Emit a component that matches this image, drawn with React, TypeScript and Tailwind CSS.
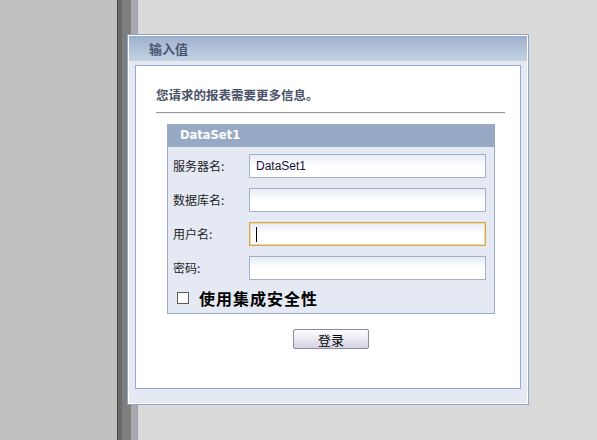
import React from 'react';

const cjk = "font-['Noto_Sans_CJK_SC','Noto_Sans',sans-serif]";

const Field: React.FC<{ label: string; value?: string; focused?: boolean }> = ({ label, value, focused }) => (
  <div className="flex items-center h-6">
    <span className={`${cjk} w-[81px] pl-[5px] text-[12px] text-[#1e1e1e] leading-none`}>{label}</span>
    <div
      className={`relative w-[237px] h-6 border ${
        focused ? 'border-[#d8a550] shadow-[inset_0_0_0_1px_#f0d9a8]' : 'border-[#a3b1c8]'
      } bg-gradient-to-b from-[#e6ecf5] via-white to-white flex items-center pl-[6px]`}
    >
      {value && (
        <span className="font-['Liberation_Sans',Arial,sans-serif] text-[12px] text-[#14103a]">{value}</span>
      )}
      {focused && <span className="w-px h-[15px] bg-black" />}
    </div>
  </div>
);

export default function App() {
  return (
    <div className="relative w-[597px] h-[440px] overflow-hidden flex">
      <div className="w-[117px] bg-[#c0c0c0]" />
      <div className="w-px bg-[#474747]" />
      <div className="w-[4px] bg-[#6b6b6b]" />
      <div className="w-[9px] bg-[#7e7e7e]" />
      <div className="w-[6px] bg-[#a9a9a9]" />
      <div className="w-px bg-[#9c9cb6]" />
      <div className="flex-1 bg-[#dadada]" />

      {/* dialog window */}
      <div className="absolute left-[127px] top-[34px] w-[402px] h-[371px] border border-[#93a5c7]">
        <div className="h-full border border-white bg-[#e4e9f3] flex flex-col">
          <div className="h-[25px] bg-gradient-to-b from-[#9db0cb] to-[#c6d3e5] flex items-center pl-[20px]">
            <span className={`${cjk} text-[13px] font-bold text-[#4b5670]`}>输入值</span>
          </div>
          <div className="mt-[4px] mx-[6px] h-[324px] border border-[#98aac9] bg-white flex flex-col">
            <div className={`${cjk} pl-[20px] pt-[20px] text-[12.5px] font-bold text-[#4a5268] leading-[17px]`}>
              您请求的报表需要更多信息。
            </div>
            <div className="ml-[20px] w-[349px] mt-[9px] border-t border-[#9a9a9a] h-[2px] bg-[#eeeeee]" />
            <div className="ml-[31px] w-[328px] mt-[10px] flex flex-col">
              <div className="h-[190px] border border-[#9aabc8] bg-[#e4e9f3] flex flex-col">
                <div className="h-[22px] bg-[#97a9c5] flex items-center pl-[12px]">
                  <span className="font-['DejaVu_Sans',Verdana,sans-serif] text-[11.5px] font-bold text-white">
                    DataSet1
                  </span>
                </div>
                <div className="flex flex-col gap-[10px] pt-[7px]">
                  <Field label="服务器名:" value="DataSet1" />
                  <Field label="数据库名:" />
                  <Field label="用户名:" focused />
                  <Field label="密码:" />
                </div>
                <div className="flex items-center mt-[10px] pl-[9px]">
                  <span className="w-[12px] h-[12px] border border-[#5a5a5a] bg-white" />
                  <span className={`${cjk} ml-[10px] text-[16px] tracking-[1px] font-bold text-black leading-none`}>
                    使用集成安全性
                  </span>
                </div>
              </div>
              <div className="flex justify-center mt-[15px]">
                <button className="w-[76px] h-[20px] rounded-[2px] border border-[#8a8aa6] bg-gradient-to-b from-white to-[#d3d3e3] flex items-center justify-center">
                  <span className={`${cjk} text-[13px] text-black leading-none`}>登录</span>
                </button>
              </div>
            </div>
          </div>
        </div>
      </div>
    </div>
  );
}
